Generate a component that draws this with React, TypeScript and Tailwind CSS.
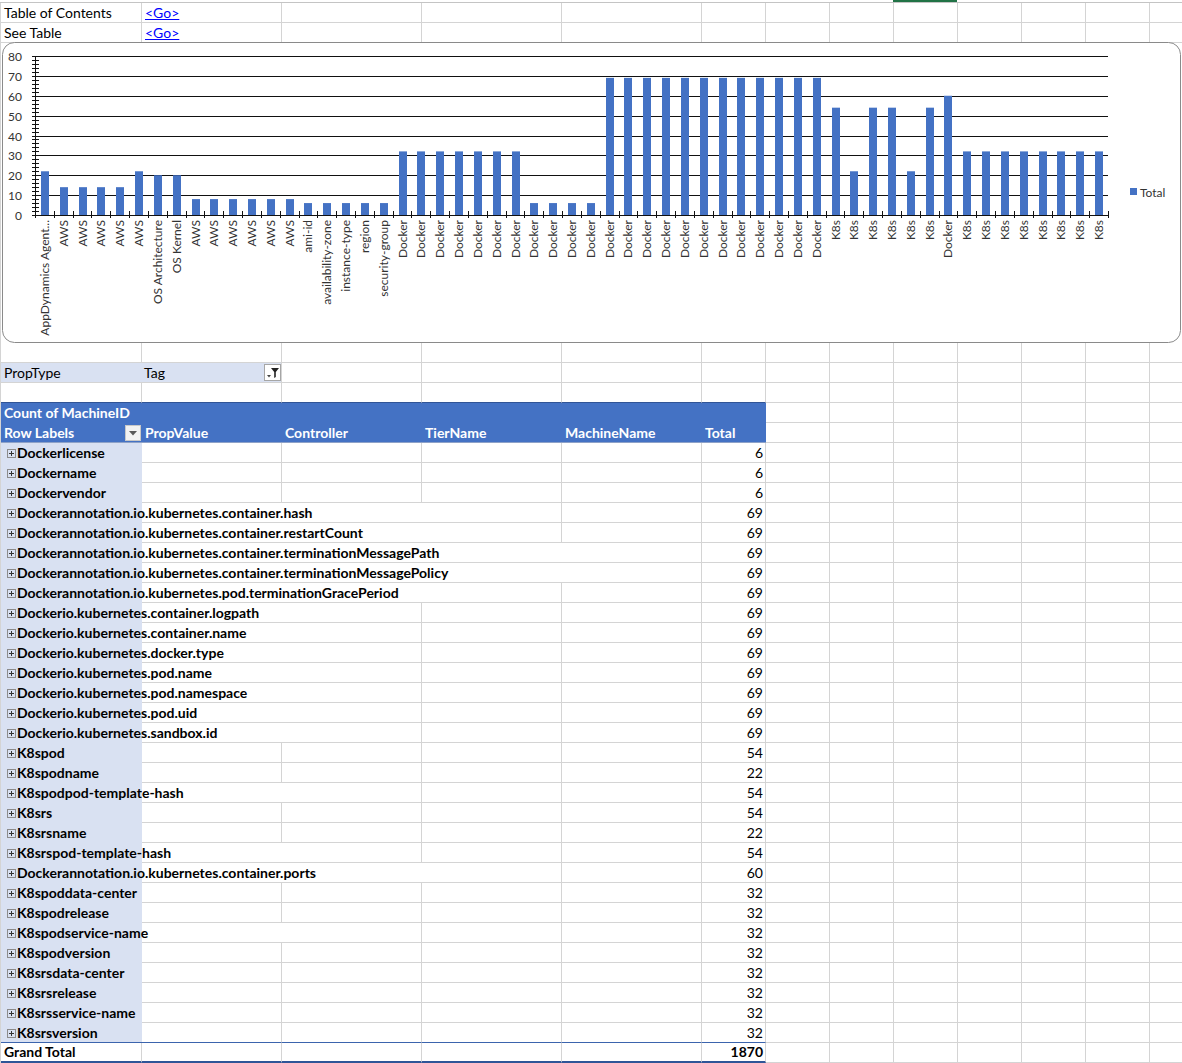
import React from "react";

const W = [
  "w-[141px]",
  "w-[140px]",
  "w-[140px]",
  "w-[140px]",
  "w-[140px]",
  "w-[64px]",
  "w-[64px]",
  "w-[64px]",
  "w-[64px]",
  "w-[64px]",
  "w-[64px]",
  "w-[64px]",
];

function Blank({ from }: { from: number }) {
  const cells = [];
  for (let i = from; i < W.length; i++) {
    cells.push(
      <div key={i} className={`${W[i]} shrink-0 h-full border-r border-b border-[#d4d4d4]`} />
    );
  }
  cells.push(<div key="m" className="flex-1 h-full border-b border-[#d4d4d4]" />);
  return <>{cells}</>;
}

function EmptyRow({ bottom }: { bottom?: string }) {
  return (
    <div className="flex h-[20px]">
      {W.map((w, i) => (
        <div
          key={i}
          className={`${w} shrink-0 h-full border-r border-b border-r-[#d4d4d4] ${
            i < 6 && bottom ? "border-b-[#305496]" : "border-b-[#d4d4d4]"
          }`}
        />
      ))}
      <div className="flex-1 h-full border-b border-[#d4d4d4]" />
    </div>
  );
}

type Bar = [string, number];
const rep = (label: string, v: number, n: number): Bar[] =>
  Array.from({ length: n }, () => [label, v] as Bar);

const bars: Bar[] = [
  ["AppDynamics Agent...", 22],
  ...rep("AWS", 14, 4),
  ["AWS", 22],
  ["OS Architecture", 20],
  ["OS Kernel", 20],
  ...rep("AWS", 8, 6),
  ["ami-id", 6],
  ["availability-zone", 6],
  ["instance-type", 6],
  ["region", 6],
  ["security-group", 6],
  ...rep("Docker", 32, 7),
  ...rep("Docker", 6, 4),
  ...rep("Docker", 69, 12),
  ["K8s", 54],
  ["K8s", 22],
  ["K8s", 54],
  ["K8s", 54],
  ["K8s", 22],
  ["K8s", 54],
  ["Docker", 60],
  ...rep("K8s", 32, 8),
];

function Chart() {
  const N = bars.length;
  const x0 = 33;
  const x1 = 1106;
  const w = (x1 - x0) / N;
  const yZero = 173;
  const scale = 159 / 80;
  const yOf = (v: number) => Math.round(yZero - v * scale) + 0.5;
  const grid = [10, 20, 30, 40, 50, 60, 70, 80];
  const minor = Array.from({ length: 41 }, (_, i) => i * 2);
  const labels = [0, 10, 20, 30, 40, 50, 60, 70, 80];
  return (
    <svg width={1179} height={301} className="block shrink-0 text-[12px]">
      <rect x={0.5} y={0.5} width={1178} height={300} rx={12} fill="#ffffff" stroke="#8a8a8a" />
      {grid.map((v) => (
        <line key={v} x1={x0} x2={x1} y1={yOf(v)} y2={yOf(v)} stroke="#111" strokeWidth={1} />
      ))}
      {bars.map(([, v], i) => {
        const cx = x0 + (i + 0.5) * w;
        const h = v * scale;
        return (
          <rect key={i} x={Math.round(cx - 3.5)} y={yZero - h} width={8} height={h} fill="#4472C4" />
        );
      })}
      <line x1={33.5} x2={33.5} y1={14} y2={174} stroke="#111" />
      <line x1={x0} x2={x1 + 1} y1={173.5} y2={173.5} stroke="#111" />
      {minor.map((v) => (
        <line key={v} x1={30} x2={37} y1={yOf(v)} y2={yOf(v)} stroke="#111" />
      ))}
      {Array.from({ length: N + 1 }, (_, k) => {
        const x = Math.round(x0 + k * w) + 0.5;
        return <line key={k} x1={x} x2={x} y1={169} y2={176} stroke="#111" />;
      })}
      {labels.map((v) => (
        <text key={v} x={20} y={yOf(v)} textAnchor="end" dominantBaseline="central" fill="#333">
          {v}
        </text>
      ))}
      {bars.map(([l], i) => {
        const cx = x0 + (i + 0.5) * w;
        return (
          <text
            key={i}
            x={cx}
            y={178}
            transform={`rotate(-90 ${cx} 178)`}
            textAnchor="end"
            dominantBaseline="central"
            fill="#333"
          >
            {l}
          </text>
        );
      })}
      <rect x={1128} y={146} width={7} height={7} fill="#4472C4" />
      <text x={1138} y={150} dominantBaseline="central" fill="#333">
        Total
      </text>
    </svg>
  );
}

function PlusBox() {
  return (
    <svg width={9} height={9} className="shrink-0 block mt-[6px]">
      <rect x={0.5} y={0.5} width={8} height={8} fill="none" stroke="#8c8c8c" />
      <line x1={2} x2={7} y1={4.5} y2={4.5} stroke="#333" />
      <line x1={4.5} x2={4.5} y1={2} y2={7} stroke="#333" />
    </svg>
  );
}

const rows: [string, number, number][] = [
  ["Dockerlicense", 6, 1],
  ["Dockername", 6, 1],
  ["Dockervendor", 6, 1],
  ["Dockerannotation.io.kubernetes.container.hash", 69, 3],
  ["Dockerannotation.io.kubernetes.container.restartCount", 69, 3],
  ["Dockerannotation.io.kubernetes.container.terminationMessagePath", 69, 4],
  ["Dockerannotation.io.kubernetes.container.terminationMessagePolicy", 69, 4],
  ["Dockerannotation.io.kubernetes.pod.terminationGracePeriod", 69, 3],
  ["Dockerio.kubernetes.container.logpath", 69, 2],
  ["Dockerio.kubernetes.container.name", 69, 2],
  ["Dockerio.kubernetes.docker.type", 69, 2],
  ["Dockerio.kubernetes.pod.name", 69, 2],
  ["Dockerio.kubernetes.pod.namespace", 69, 2],
  ["Dockerio.kubernetes.pod.uid", 69, 2],
  ["Dockerio.kubernetes.sandbox.id", 69, 2],
  ["K8spod", 54, 1],
  ["K8spodname", 22, 1],
  ["K8spodpod-template-hash", 54, 2],
  ["K8srs", 54, 1],
  ["K8srsname", 22, 1],
  ["K8srspod-template-hash", 54, 2],
  ["Dockerannotation.io.kubernetes.container.ports", 60, 3],
  ["K8spoddata-center", 32, 1],
  ["K8spodrelease", 32, 1],
  ["K8spodservice-name", 32, 2],
  ["K8spodversion", 32, 1],
  ["K8srsdata-center", 32, 1],
  ["K8srsrelease", 32, 1],
  ["K8srsservice-name", 32, 1],
  ["K8srsversion", 32, 1],
];

function DataRow({ label, value, span, last }: { label: string; value: number; span: number; last: boolean }) {
  const bb = last ? "border-b-[#3b64ad]" : "border-b-[#d4d4d4]";
  return (
    <div className="flex h-[20px]">
      <div
        className={`w-[141px] shrink-0 h-full bg-[#D9E1F2] relative z-10 flex items-start whitespace-nowrap font-bold pl-[6px] ${
          last ? "border-b border-b-[#3b64ad]" : ""
        }`}
      >
        <PlusBox />
        <span className="ml-[1px] leading-[19px]">{label}</span>
      </div>
      {[1, 2, 3, 4].map((j) => (
        <div
          key={j}
          className={`w-[140px] shrink-0 h-full border-b ${bb} ${j >= span ? "border-r border-r-[#d4d4d4]" : ""}`}
        />
      ))}
      <div className={`w-[64px] shrink-0 h-full border-b border-r border-r-[#d4d4d4] ${bb} text-right pr-[2px] leading-[19px]`}>
        {value}
      </div>
      <Blank from={6} />
    </div>
  );
}

export default function App() {
  return (
    <div className="w-[1182px] h-[1063px] overflow-hidden bg-white font-['Lato',sans-serif] text-[14px] text-black">
      <div className="flex h-[3px] border-b border-[#c4c4c4]">
        <div className="w-[893px] shrink-0" />
        <div className="w-[64px] h-[2px] bg-[#217346]" />
      </div>
      <div className="border-l border-[#d4d4d4]">
        <div className="flex h-[20px]">
          <div className="w-[141px] shrink-0 h-full border-r border-b border-[#d4d4d4] pl-[3px] leading-[19px] whitespace-nowrap">
            Table of Contents
          </div>
          <div className="w-[140px] shrink-0 h-full border-r border-b border-[#d4d4d4] pl-[3px] leading-[19px]">
            <span className="text-[#0000ff] underline">&lt;Go&gt;</span>
          </div>
          <Blank from={2} />
        </div>
        <div className="flex h-[20px]">
          <div className="w-[141px] shrink-0 h-full border-r border-b border-[#d4d4d4] pl-[3px] leading-[19px] whitespace-nowrap">
            See Table
          </div>
          <div className="w-[140px] shrink-0 h-full border-r border-b border-[#d4d4d4] pl-[3px] leading-[19px]">
            <span className="text-[#0000ff] underline">&lt;Go&gt;</span>
          </div>
          <Blank from={2} />
        </div>
        <div className="-mt-px flex h-[301px] pl-[1px]">
          <Chart />
        </div>
        <EmptyRow />
        <div className="flex h-[20px]">
          <div className="w-[141px] shrink-0 h-full bg-[#D9E1F2] border-b border-[#d4d4d4] pl-[3px] leading-[19px]">
            PropType
          </div>
          <div className="w-[140px] shrink-0 h-full bg-[#D9E1F2] border-r border-b border-[#d4d4d4] pl-[2px] flex items-start justify-between">
            <span className="leading-[19px]">Tag</span>
            <div className="w-[17px] h-[17px] mt-[1px] border border-[#a6a6a6] bg-white flex items-center justify-center">
              <svg width={15} height={15} className="block">
                <path d="M6 3 H14 L10.8 7 V12 L9.2 13 V7 Z" fill="#222" />
                <path d="M2 10 H6 L4 12.5 Z" fill="#444" />
              </svg>
            </div>
          </div>
          <Blank from={2} />
        </div>
        <EmptyRow bottom="blue" />
        <div className="flex h-[20px]">
          <div className="w-[765px] shrink-0 h-full bg-[#4472C4] text-white font-bold pl-[3px] leading-[19px]">
            Count of MachineID
          </div>
          <Blank from={6} />
        </div>
        <div className="flex h-[20px]">
          <div className="w-[765px] shrink-0 h-full bg-[#4472C4] border-b border-[#8ea2c8] text-white font-bold flex">
            <div className="w-[141px] shrink-0 pl-[3px] pr-[1px] flex items-start justify-between">
              <span className="leading-[19px]">Row Labels</span>
              <div className="w-[16px] h-[16px] mt-[2px] bg-[#f2f2f2] border border-[#c8c8c8] flex items-center justify-center">
                <svg width={8} height={5} className="block">
                  <path d="M0 0 H8 L4 4.5 Z" fill="#595959" />
                </svg>
              </div>
            </div>
            <div className="w-[140px] shrink-0 pl-[3px] leading-[19px]">PropValue</div>
            <div className="w-[140px] shrink-0 pl-[3px] leading-[19px]">Controller</div>
            <div className="w-[140px] shrink-0 pl-[3px] leading-[19px]">TierName</div>
            <div className="w-[140px] shrink-0 pl-[3px] leading-[19px]">MachineName</div>
            <div className="w-[64px] shrink-0 pl-[3px] leading-[19px]">Total</div>
          </div>
          <Blank from={6} />
        </div>
        {rows.map(([l, v, s], i) => (
          <DataRow key={i} label={l} value={v} span={s} last={i === rows.length - 1} />
        ))}
        <div className="flex h-[20px]">
          <div className="w-[141px] shrink-0 h-full border-r border-r-[#d4d4d4] border-b-2 border-b-[#2F5597] font-bold pl-[3px] leading-[18px]">
            Grand Total
          </div>
          {[1, 2, 3, 4].map((j) => (
            <div key={j} className="w-[140px] shrink-0 h-full border-r border-r-[#d4d4d4] border-b-2 border-b-[#2F5597]" />
          ))}
          <div className="w-[64px] shrink-0 h-full border-r border-r-[#d4d4d4] border-b-2 border-b-[#2F5597] font-bold text-right pr-[2px] leading-[18px]">
            1870
          </div>
          <Blank from={6} />
        </div>
      </div>
    </div>
  );
}
